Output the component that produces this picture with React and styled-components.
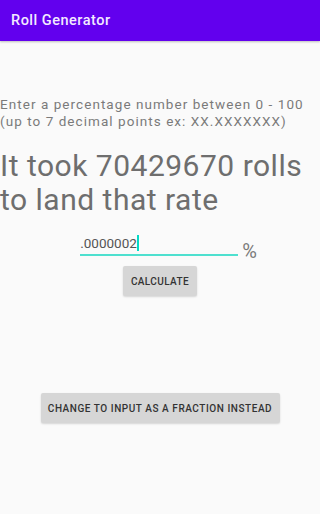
import styled, { createGlobalStyle } from "styled-components";

const Global = createGlobalStyle`
  html, body { margin: 0; padding: 0; background: #fafafa; }
  body { font-family: Roboto, "Noto Sans", sans-serif; }
`;

export default function App() {
  return (
    <Screen>
      <Global />
      <AppBar>
        <Title>Roll Generator</Title>
      </AppBar>
      <Content>
        <Hint>
          Enter a percentage number between 0 - 100
          <br />
          (up to 7 decimal points ex: XX.XXXXXXX)
        </Hint>
        <Result>
          It took 70429670 rolls
          <br />
          to land that rate
        </Result>
        <InputRow>
          <Field>
            <Value>.0000002</Value>
            <Caret />
          </Field>
          <Percent>%</Percent>
        </InputRow>
        <Button $w={74} $ls={0.4}>CALCULATE</Button>
        <Button $w={239} $top={97} $ls={0.55}>
          CHANGE TO INPUT AS A FRACTION INSTEAD
        </Button>
      </Content>
    </Screen>
  );
}

const Screen = styled.div`
  width: 320px;
  height: 514px;
  background: #fafafa;
  display: flex;
  flex-direction: column;
  overflow: hidden;
`;

const AppBar = styled.header`
  height: 41px;
  background: #6200ee;
  display: flex;
  align-items: center;
  padding-left: 11px;
  box-shadow: 0 1px 2px rgba(0, 0, 0, 0.25);
`;

const Title = styled.h1`
  margin: 0;
  font-size: 14.5px;
  font-weight: 500;
  letter-spacing: 0.5px;
  color: #f3eaff;
`;

const Content = styled.main`
  display: flex;
  flex-direction: column;
  align-items: center;
  padding-top: 55px;
`;

const Hint = styled.p`
  align-self: stretch;
  margin: 0;
  font-size: 13.5px;
  line-height: 17px;
  letter-spacing: 1.05px;
  color: #7a7a7a;
  white-space: nowrap;
`;

const Result = styled.p`
  align-self: stretch;
  margin: 19px 0 0;
  font-size: 30px;
  line-height: 34px;
  letter-spacing: 0.5px;
  color: #6e6e6e;
  white-space: nowrap;
`;

const InputRow = styled.div`
  display: flex;
  align-items: flex-end;
  margin-top: 15px;
  margin-left: 17px;
`;

const Field = styled.div`
  width: 158px;
  height: 22px;
  display: flex;
  align-items: center;
  border-bottom: 2px solid #4ee0cf;
`;

const Value = styled.span`
  font-size: 13.5px;
  color: #555;
`;

const Caret = styled.span`
  width: 2px;
  height: 16px;
  background: #03dac5;
`;

const Percent = styled.span`
  font-size: 20px;
  color: #7a7a7a;
  margin-left: 4px;
  line-height: 22px;
  margin-bottom: -6px;
`;

const Button = styled.button`
  width: ${(p) => p.$w}px;
  height: 30px;
  margin-top: ${(p) => p.$top || 10}px;
  border: none;
  border-radius: 2px;
  background: #d6d6d6;
  box-shadow: 0 1px 2px rgba(0, 0, 0, 0.15);
  font-family: Roboto, sans-serif;
  font-size: 10px;
  font-weight: 500;
  letter-spacing: ${(p) => p.$ls}px;
  color: #333;
  padding: 0;
  white-space: nowrap;
`;
